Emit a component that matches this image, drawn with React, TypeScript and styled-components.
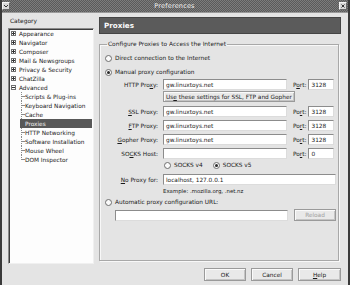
import React from 'react';
import styled, { createGlobalStyle, css } from 'styled-components';

const GlobalStyle = createGlobalStyle`
  html, body {
    margin: 0;
    padding: 0;
    background: #e4e4e4;
  }
  body {
    font-family: "DejaVu Sans", "Liberation Sans", sans-serif;
    font-size: 5.8px;
    color: #1a1a1a;
  }
`;

const Window = styled.div`
  width: 350px;
  height: 285px;
  box-sizing: border-box;
  display: flex;
  flex-direction: column;
  background: #e4e4e4;
  border-left: 2px solid #3a3a3a;
  border-right: 2px solid #3a3a3a;
  overflow: hidden;
`;

const TitleBar = styled.div`
  height: 12px;
  flex: none;
  display: flex;
  align-items: center;
  justify-content: space-between;
  padding: 0 1px 0 0;
  background: repeating-conic-gradient(#5a5a5a 0 25%, #7c7c7c 0 50%) 0 0 / 2px 2px;
  border-bottom: 1px solid #9a9a9a;
`;

const TitleText = styled.span`
  color: #f2f2f2;
  font-size: 6.5px;
  letter-spacing: 0.2px;
`;

const TitleButton = styled.div`
  width: 8px;
  height: 8px;
  box-sizing: border-box;
  background: #d8d8d8;
  border: 1px solid #f4f4f4;
  border-right-color: #6a6a6a;
  border-bottom-color: #6a6a6a;
  display: flex;
  align-items: center;
  justify-content: center;
`;

const Body = styled.div`
  flex: 1;
  display: flex;
  flex-direction: column;
  padding: 2px 7px 0 6px;
`;

const Columns = styled.div`
  display: flex;
  gap: 5px;
`;

const Sidebar = styled.div`
  width: 86px;
  flex: none;
  display: flex;
  flex-direction: column;
`;

const CategoryLabel = styled.div`
  height: 13px;
  line-height: 13px;
  padding-left: 2px;
  font-size: 5.9px;
`;

const TreeBox = styled.div`
  height: 236px;
  box-sizing: border-box;
  background: #fdfdfd;
  border: 1px solid #8a8a8a;
  border-right-color: #f0f0f0;
  border-bottom-color: #f0f0f0;
  box-shadow: inset 1px 1px 0 #3c3c3c;
  padding: 0 0 0 2px;
`;

const TreeRow = styled.div<{ $child?: boolean; $last?: boolean }>`
  position: relative;
  height: 9px;
  display: flex;
  align-items: center;
  gap: 2px;
  white-space: nowrap;
  ${p =>
    p.$child &&
    css`
      padding-left: 13px;
      &::before {
        content: '';
        position: absolute;
        left: 10px;
        top: 0;
        height: ${p.$last ? '5px' : '9px'};
        border-left: 1px dotted #8a8a8a;
      }
      &::after {
        content: '';
        position: absolute;
        left: 11px;
        top: 4px;
        width: 2px;
        border-top: 1px dotted #8a8a8a;
      }
    `}
`;

const RowLabel = styled.span<{ $selected?: boolean }>`
  padding-left: 1px;
  ${p =>
    p.$selected &&
    css`
      background: #585858;
      color: #f4f4f4;
      align-self: stretch;
      display: flex;
      align-items: center;
      flex: 1;
      position: relative;
      z-index: 1;
      margin-left: -4px;
      padding-left: 5px;
      margin-right: 1px;
    `}
`;

const TreeTwisty = styled.span`
  width: 5px;
  height: 5px;
  box-sizing: border-box;
  border: 1px solid #707070;
  background: #fff;
  position: relative;
  flex: none;
  &::before {
    content: '';
    position: absolute;
    left: 0;
    top: 1px;
    width: 3px;
    height: 1px;
    background: #333;
  }
`;

const TwistyPlus = styled(TreeTwisty)`
  &::after {
    content: '';
    position: absolute;
    left: 1px;
    top: 0;
    width: 1px;
    height: 3px;
    background: #333;
  }
`;

const Main = styled.div`
  flex: 1;
  display: flex;
  flex-direction: column;
  padding-top: 2px;
`;

const Header = styled.div`
  height: 17px;
  box-sizing: border-box;
  background: #5b5b5b;
  border: 1px solid #454545;
  color: #fafafa;
  font-weight: 700;
  font-size: 7.2px;
  display: flex;
  align-items: center;
  padding-left: 4px;
`;

const Group = styled.fieldset`
  margin: 6px 2px 0 0;
  padding: 4px 2px 0 5px;
  height: 221px;
  box-sizing: border-box;
  border: 1px solid #a8a8a8;
  box-shadow: 1px 1px 0 #f8f8f8, inset 1px 1px 0 #f8f8f8;
  display: flex;
  flex-direction: column;
`;

const Legend = styled.legend`
  padding: 0 1px;
  margin-left: 2px;
  line-height: 8px;
  font-size: 5.9px;
`;

const Line = styled.div<{ $top?: number; $h?: number; $indent?: number }>`
  display: flex;
  align-items: center;
  margin-top: ${p => p.$top ?? 0}px;
  height: ${p => p.$h ?? 10}px;
  padding-left: ${p => p.$indent ?? 0}px;
  flex: none;
`;

const Radio = styled.span<{ $on?: boolean }>`
  width: 7px;
  height: 7px;
  box-sizing: border-box;
  border-radius: 50%;
  border: 1px solid #6e6e6e;
  background: #fbfbfb;
  margin-right: 3px;
  flex: none;
  display: flex;
  align-items: center;
  justify-content: center;
  &::after {
    content: '';
    width: 3px;
    height: 3px;
    border-radius: 50%;
    background: ${p => (p.$on ? '#2a2a2a' : 'transparent')};
  }
`;

const RadioText = styled.span<{ $gap?: number }>`
  margin-right: ${p => p.$gap ?? 0}px;
`;

const FieldLabel = styled.span`
  width: 53px;
  text-align: right;
  margin-right: 5px;
  flex: none;
  u {
    text-decoration: underline;
    text-underline-offset: 1px;
  }
`;

const Input = styled.div<{ $w: number; $gap?: number }>`
  width: ${p => p.$w}px;
  height: 11px;
  margin-right: ${p => p.$gap ?? 0}px;
  box-sizing: border-box;
  background: #ffffff;
  border: 1px solid #8c8c8c;
  border-right-color: #dcdcdc;
  border-bottom-color: #dcdcdc;
  padding-left: 2px;
  display: flex;
  align-items: center;
  flex: none;
  white-space: nowrap;
  overflow: hidden;
`;

const PortLabel = styled.span`
  margin: 0 2px 0 6px;
  flex: none;
  u {
    text-underline-offset: 1px;
  }
`;

const Button = styled.div<{ $w: number; $h?: number; $disabled?: boolean }>`
  width: ${p => p.$w}px;
  height: ${p => p.$h ?? 11}px;
  box-sizing: border-box;
  background: #e9e9e9;
  border: 1px solid #9a9a9a;
  box-shadow: inset 1px 1px 0 #fafafa, inset -1px -1px 0 #c4c4c4;
  display: flex;
  align-items: center;
  justify-content: center;
  white-space: nowrap;
  flex: none;
  color: ${p => (p.$disabled ? '#a0a0a0' : '#1a1a1a')};
  u {
    text-underline-offset: 1px;
  }
`;

const Hint = styled.span`
  padding-left: 58px;
  font-size: 5.4px;
`;

const Footer = styled.div`
  display: flex;
  justify-content: flex-end;
  gap: 5px;
  margin-top: 4px;
`;

const treeItems: { label: string; kind: 'plus' | 'minus' | 'child'; selected?: boolean; last?: boolean }[] = [
  { label: 'Appearance', kind: 'plus' },
  { label: 'Navigator', kind: 'plus' },
  { label: 'Composer', kind: 'plus' },
  { label: 'Mail & Newsgroups', kind: 'plus' },
  { label: 'Privacy & Security', kind: 'plus' },
  { label: 'ChatZilla', kind: 'plus' },
  { label: 'Advanced', kind: 'minus' },
  { label: 'Scripts & Plug-ins', kind: 'child' },
  { label: 'Keyboard Navigation', kind: 'child' },
  { label: 'Cache', kind: 'child' },
  { label: 'Proxies', kind: 'child', selected: true },
  { label: 'HTTP Networking', kind: 'child' },
  { label: 'Software Installation', kind: 'child' },
  { label: 'Mouse Wheel', kind: 'child' },
  { label: 'DOM Inspector', kind: 'child', last: true },
];

const proxyRows = [
  { label: <><u>S</u>SL Proxy:</>, port: '3128', top: 4 },
  { label: <><u>F</u>TP Proxy:</>, port: '3128', top: 3 },
  { label: <><u>G</u>opher Proxy:</>, port: '3128', top: 3 },
  { label: <>SO<u>C</u>KS Host:</>, port: '0', top: 3, empty: true },
];

const App: React.FC = () => {
  return (
    <>
      <GlobalStyle />
      <Window>
        <TitleBar>
          <TitleButton>
            <svg width="6" height="6" viewBox="0 0 6 6">
              <path d="M1 2 L3 4 L5 2" stroke="#333" strokeWidth="1" fill="none" />
            </svg>
          </TitleButton>
          <TitleText>Preferences</TitleText>
          <TitleButton>
            <svg width="6" height="6" viewBox="0 0 6 6">
              <path d="M1.5 1.5 L4.5 4.5 M4.5 1.5 L1.5 4.5" stroke="#333" strokeWidth="1" />
            </svg>
          </TitleButton>
        </TitleBar>
        <Body>
          <Columns>
            <Sidebar>
              <CategoryLabel>Category</CategoryLabel>
              <TreeBox>
                {treeItems.map(item => (
                  <TreeRow key={item.label} $child={item.kind === 'child'} $last={item.last}>
                    {item.kind === 'plus' && <TwistyPlus />}
                    {item.kind === 'minus' && <TreeTwisty />}
                    <RowLabel $selected={item.selected}>{item.label}</RowLabel>
                  </TreeRow>
                ))}
              </TreeBox>
            </Sidebar>
            <Main>
              <Header>Proxies</Header>
              <Group>
                <Legend>Configure Proxies to Access the Internet</Legend>
                <Line $top={1}>
                  <Radio />
                  <span>Direct connection to the Internet</span>
                </Line>
                <Line $top={4}>
                  <Radio $on />
                  <span>Manual proxy configuration</span>
                </Line>
                <Line $top={2} $h={11}>
                  <FieldLabel>HTTP Pro<u>x</u>y:</FieldLabel>
                  <Input $w={124}>gw.linuxtoys.net</Input>
                  <PortLabel>P<u>o</u>rt:</PortLabel>
                  <Input $w={26}>3128</Input>
                </Line>
                <Line $top={1} $h={11}>
                  <FieldLabel />
                  <Button $w={132}>
                    <span>Us<u>e</u> these settings for SSL, FTP and Gopher</span>
                  </Button>
                </Line>
                {proxyRows.map((row, i) => (
                  <Line key={i} $top={row.top} $h={11}>
                    <FieldLabel>{row.label}</FieldLabel>
                    <Input $w={124}>{row.empty ? '' : 'gw.linuxtoys.net'}</Input>
                    <PortLabel>Po<u>r</u>t:</PortLabel>
                    <Input $w={26}>{row.port}</Input>
                  </Line>
                ))}
                <Line $top={1} $indent={59}>
                  <Radio />
                  <RadioText $gap={10}>SOCKS v4</RadioText>
                  <Radio $on />
                  <RadioText>SOCKS v5</RadioText>
                </Line>
                <Line $top={4} $h={11}>
                  <FieldLabel><u>N</u>o Proxy for:</FieldLabel>
                  <Input $w={173}>localhost, 127.0.0.1</Input>
                </Line>
                <Line $top={2} $h={8}>
                  <Hint>Example: .mozilla.org, .net.nz</Hint>
                </Line>
                <Line $top={2}>
                  <Radio />
                  <span>Automatic proxy configuration URL:</span>
                </Line>
                <Line $top={2} $h={12} $indent={10}>
                  <Input $w={173} $gap={6} />
                  <Button $w={42} $h={12} $disabled>Reload</Button>
                </Line>
              </Group>
            </Main>
          </Columns>
          <Footer>
            <Button $w={42} $h={13}>OK</Button>
            <Button $w={42} $h={13}>Cancel</Button>
            <Button $w={43} $h={13}><span><u>H</u>elp</span></Button>
          </Footer>
        </Body>
      </Window>
    </>
  );
};

export default App;
